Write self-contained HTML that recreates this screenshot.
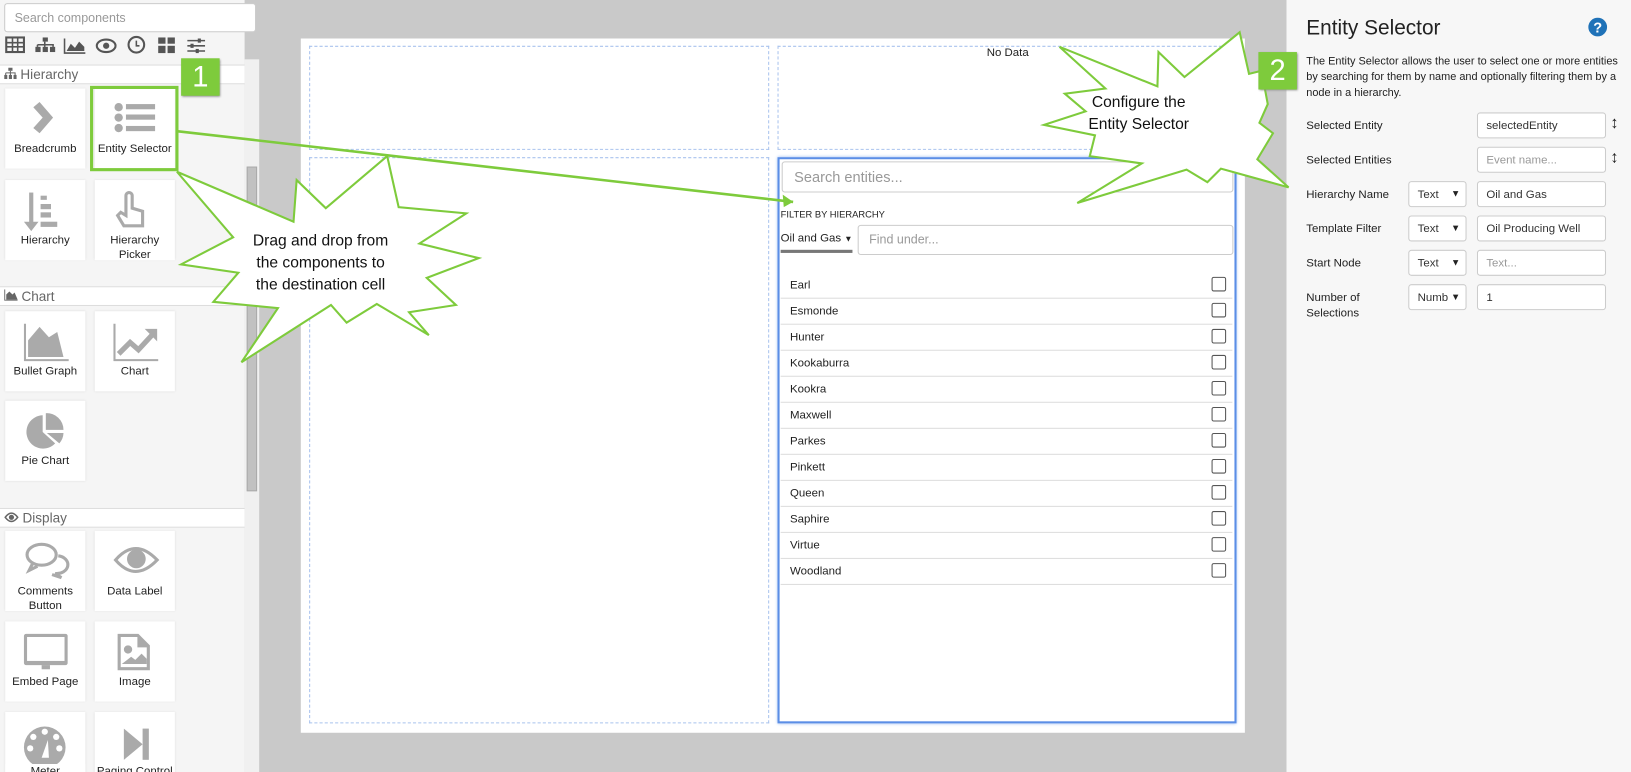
<!DOCTYPE html>
<html><head><meta charset="utf-8"><style>
*{box-sizing:border-box;margin:0;padding:0}
html,body{width:1631px;height:772px;overflow:hidden}
body{position:relative;font-family:"Liberation Sans",sans-serif;background:#c9c9c9;font-size:11px;color:#222}
#w{position:absolute;left:0;top:0;width:1567px;height:742px;transform:scale(1.04085);transform-origin:0 0}
.a{position:absolute}
.side{left:0;top:0;width:235px;height:742px;background:#f5f5f5}
.search{left:4px;top:3px;width:242px;height:28px;border:1px solid #ccc;border-radius:3px;background:#fff;color:#999;font-size:12px;padding:6px 9px}
.hdr{left:0;width:235px;height:19px;background:#fff;border-top:1px solid #ddd;border-bottom:1px solid #ddd;color:#666;font-size:13px;padding:1px 4px}
.tile{width:77px;height:77px;background:#fff;box-shadow:0 0 2px #ddd;text-align:center;font-size:11px;color:#222}
.tile .lbl{position:absolute;left:0;right:0;top:51px;line-height:14px}
.tile svg{position:absolute;left:18px;top:10px;overflow:visible}
.canvas{left:289px;top:37px;width:907px;height:667px;background:#fff}
.cell{border:1px dashed #a9c3ee}
.right{left:1236px;top:0;width:331px;height:742px;background:#f7f7f7}
.lab{left:1255px;font-size:11px;color:#222}
.inp{left:1419px;width:124px;height:25px;border:1px solid #ccc;border-radius:3px;background:#fff;padding:6px 8px;font-size:11px;color:#333}
.sel{left:1353px;width:56px;height:25px;border:1px solid #ccc;border-radius:3px;background:#fff;padding:6px 8px;font-size:11px;color:#333}
.sel:after{content:"▼";position:absolute;right:5px;top:6px;font-size:9px;color:#222}
.row{left:750px;width:434px;height:25px;border-bottom:1px solid #ddd;font-size:11px;padding:6px 9px}
.row i{position:absolute;right:6px;top:4px;width:14px;height:14px;border:1px solid #555;border-radius:2px}
.badge{width:37px;height:36px;background:#7ecb3c;color:#fff;font-size:28px;text-align:center;line-height:36px;box-shadow:1px 1px 2px #888}
</style></head><body><div id="w">
<div class="a side"></div>
<div class="a search">Search components</div>
<svg class="a" style="left:4px;top:34px" width="200" height="20" fill="#555">
<rect x="2" y="2" width="17" height="14" fill="none" stroke="#555" stroke-width="2"/><path d="M2 7h17M2 11h17M8 2v14M13 2v14" stroke="#555" stroke-width="1.5"/>
<rect x="37" y="2" width="5" height="4"/><rect x="30" y="11" width="5" height="5"/><rect x="37" y="11" width="5" height="5"/><rect x="44" y="11" width="5" height="5"/><path d="M39 6v5M32 9h15v2M32 9v2" stroke="#555" stroke-width="1.5" fill="none"/>
<path d="M58 3v14h20" stroke="#555" stroke-width="1.5" fill="none"/><path d="M60 15l4-7 4 4 4-6 5 5v4z"/>
<ellipse cx="98" cy="10" rx="9" ry="6" fill="none" stroke="#555" stroke-width="2"/><circle cx="98" cy="10" r="3"/>
<circle cx="127" cy="9" r="7.5" fill="none" stroke="#555" stroke-width="2"/><path d="M127 5v5h3" stroke="#555" stroke-width="1.5" fill="none"/>
<rect x="148" y="2" width="7" height="6"/><rect x="157" y="2" width="7" height="6"/><rect x="148" y="10" width="7" height="7"/><rect x="157" y="10" width="7" height="7"/>
<path d="M176 5h17M176 10h17M176 15h17" stroke="#555" stroke-width="1.5"/><rect x="186" y="3" width="3" height="4"/><rect x="179" y="8" width="3" height="4"/><rect x="184" y="13" width="3" height="4"/>
</svg>
<div class="a" style="left:235px;top:57px;width:14px;height:685px;background:#f0f0f0"></div>
<div class="a" style="left:237px;top:160px;width:10px;height:312px;background:#c1c1c1;border:1px solid #aaa"></div>

<div class="a hdr" style="top:62px"><svg width="12" height="11" fill="#666"><rect x="4" y="0" width="4" height="3"/><rect x="0" y="7" width="3" height="4"/><rect x="4.5" y="7" width="3" height="4"/><rect x="9" y="7" width="3" height="4"/><path d="M6 3v4M1.5 5h9v2M1.5 5v2" stroke="#666" fill="none"/></svg> Hierarchy</div>
<div class="a tile" style="left:5px;top:85px"><svg width="40" height="40" fill="#aaa"><path d="M15 3l13 15-13 15-6-5 9-10-9-10z"/></svg><div class="lbl">Breadcrumb</div></div>
<div class="a tile" style="left:91px;top:85px"><svg width="40" height="40" fill="#aaa"><circle cx="5" cy="8" r="4"/><circle cx="5" cy="18" r="4"/><circle cx="5" cy="28" r="4"/><rect x="12" y="5" width="28" height="5"/><rect x="12" y="15" width="28" height="5"/><rect x="12" y="26" width="28" height="5"/></svg><div class="lbl">Entity Selector</div></div>
<div class="a tile" style="left:5px;top:173px"><svg width="40" height="44" fill="#aaa"><rect x="5" y="2" width="4" height="30"/><path d="M0 30h14l-7 9z"/><rect x="16" y="5" width="6" height="4"/><rect x="16" y="13" width="10" height="5"/><rect x="16" y="21" width="10" height="5"/><rect x="16" y="30" width="16" height="5"/></svg><div class="lbl">Hierarchy</div></div>
<div class="a tile" style="left:91px;top:173px"><svg width="40" height="40" fill="none" stroke="#aaa" stroke-width="3"><path d="M12 20V5a3 3 0 016 0v12l10 3v14H10L4 24l3-3 5 3z"/></svg><div class="lbl">Hierarchy<br>Picker</div></div>

<div class="a hdr" style="top:275px"><svg width="13" height="11" fill="#666"><path d="M0 0v11h13v-1H1V0z"/><path d="M2 10V5l3-3 3 3 2-2 3 7z"/></svg> Chart</div>
<div class="a tile" style="left:5px;top:299px"><svg width="44" height="40" fill="#aaa"><path d="M1 2v35h42" stroke="#aaa" stroke-width="2" fill="none"/><path d="M4 34V18l11-13 9 10 8-5 6 24z"/></svg><div class="lbl">Bullet Graph</div></div>
<div class="a tile" style="left:91px;top:299px"><svg width="44" height="40"><path d="M1 2v35h42" stroke="#aaa" stroke-width="2" fill="none"/><path d="M5 31l11-11 8 7 13-14" stroke="#aaa" stroke-width="5" fill="none"/><path d="M30 7h12v12z" fill="#aaa"/></svg><div class="lbl">Chart</div></div>
<div class="a tile" style="left:5px;top:385px"><svg width="40" height="40" fill="#aaa"><path d="M18 4a16 16 0 1012 27L18 20z"/><path d="M21 2a16 16 0 0117 16H21z"/><path d="M22 21h16a16 16 0 01-4 10z"/></svg><div class="lbl">Pie Chart</div></div>

<div class="a hdr" style="top:488px"><svg width="14" height="10"><path d="M1 5q6-8 12 0q-6 8-12 0z" fill="none" stroke="#666" stroke-width="1.5"/><circle cx="7" cy="5" r="2.5" fill="#666"/></svg> Display</div>
<div class="a tile" style="left:5px;top:510px"><svg width="44" height="40" fill="none" stroke="#aaa" stroke-width="3"><ellipse cx="17" cy="13" rx="14" ry="10"/><path d="M8 22l-3 6 8-4"/><path d="M33 14a10 8 0 01-3 17l6 4-9-3"/></svg><div class="lbl">Comments<br>Button</div></div>
<div class="a tile" style="left:91px;top:510px"><svg width="44" height="40"><path d="M2 18q19-22 40 0q-21 22-40 0z" fill="none" stroke="#aaa" stroke-width="3"/><circle cx="22" cy="17" r="9" fill="#aaa"/></svg><div class="lbl">Data Label</div></div>
<div class="a tile" style="left:5px;top:597px"><svg width="44" height="40" fill="#aaa"><rect x="0" y="2" width="42" height="30" rx="2"/><rect x="3" y="5" width="36" height="23" fill="#fff"/><rect x="17" y="32" width="8" height="4"/></svg><div class="lbl">Embed Page</div></div>
<div class="a tile" style="left:91px;top:597px"><svg width="40" height="40" fill="#aaa"><path d="M4 2h20l11 11v24H4z"/><path d="M7 5h16v10h9v19H7z" fill="#fff"/><circle cx="14" cy="17" r="4"/><path d="M8 31l9-7 4 3 6-6 5 5v5z"/></svg><div class="lbl">Image</div></div>
<div class="a tile" style="left:5px;top:684px;overflow:hidden"><svg width="44" height="44" fill="#aaa"><circle cx="20" cy="24" r="20"/><circle cx="20" cy="9" r="3" fill="#fff"/><circle cx="9" cy="14" r="3" fill="#fff"/><circle cx="31" cy="14" r="3" fill="#fff"/><circle cx="6" cy="25" r="3" fill="#fff"/><circle cx="34" cy="25" r="3" fill="#fff"/><path d="M17 34l6-17 1 17z" fill="#fff"/></svg><div class="lbl" style="top:50px;background:#fff">Meter</div></div>
<div class="a tile" style="left:91px;top:684px"><svg width="44" height="40" fill="#aaa"><path d="M10 6l18 15-18 15z"/><rect x="28" y="6" width="6" height="30"/></svg><div class="lbl" style="top:50px">Paging Control</div></div>

<div class="a canvas"></div>
<div class="a cell" style="left:297px;top:44px;width:442px;height:100px"></div>
<div class="a cell" style="left:747px;top:44px;width:442px;height:100px"></div>
<div class="a" style="left:948px;top:45px;font-size:11px">No Data</div>
<div class="a cell" style="left:297px;top:151px;width:442px;height:544px"></div>
<div class="a" style="left:747px;top:151px;width:441px;height:544px;border:2px solid #5b8ee6;box-shadow:0 0 3px #9bbcf2"></div>
<div class="a" style="left:751px;top:155px;width:434px;height:30px;border:1px solid #ccc;border-radius:3px;color:#999;font-size:14px;padding:6px 11px">Search entities...</div>
<div class="a" style="left:750px;top:201px;font-size:9px">FILTER BY HIERARCHY</div>
<div class="a" style="left:750px;top:223px;font-size:11px">Oil and Gas <span style="font-size:8px">▼</span></div>
<div class="a" style="left:750px;top:240px;width:69px;height:3px;background:#777"></div>
<div class="a" style="left:824px;top:216px;width:361px;height:29px;border:1px solid #ccc;border-radius:3px;color:#999;font-size:12px;padding:6px 10px">Find under...</div>
<div class="a row" style="top:262px">Earl<i></i></div>
<div class="a row" style="top:287px">Esmonde<i></i></div>
<div class="a row" style="top:312px">Hunter<i></i></div>
<div class="a row" style="top:337px">Kookaburra<i></i></div>
<div class="a row" style="top:362px">Kookra<i></i></div>
<div class="a row" style="top:387px">Maxwell<i></i></div>
<div class="a row" style="top:412px">Parkes<i></i></div>
<div class="a row" style="top:437px">Pinkett<i></i></div>
<div class="a row" style="top:462px">Queen<i></i></div>
<div class="a row" style="top:487px">Saphire<i></i></div>
<div class="a row" style="top:512px">Virtue<i></i></div>
<div class="a row" style="top:537px">Woodland<i></i></div>

<div class="a right"></div>
<div class="a" style="left:1255px;top:16px;font-size:20px;color:#222">Entity Selector</div>
<svg class="a" style="left:1525px;top:16px" width="20" height="20"><circle cx="10" cy="10" r="9" fill="#1f72b8"/><text x="10" y="15" font-size="14" font-weight="bold" fill="#fff" text-anchor="middle" font-family="Liberation Sans">?</text></svg>
<div class="a" style="left:1255px;top:52px;width:300px;font-size:10.5px;line-height:15px">The Entity Selector allows the user to select one or more entities by searching for them by name and optionally filtering them by a node in a hierarchy.</div>
<div class="a lab" style="top:115px">Selected Entity</div><div class="a inp" style="top:108px">selectedEntity</div>
<div class="a lab" style="top:148px">Selected Entities</div><div class="a inp" style="top:141px;color:#999">Event name...</div>
<div class="a" style="left:1547px;top:110px;font-size:16px;font-weight:bold">↕</div>
<div class="a" style="left:1547px;top:143px;font-size:16px;font-weight:bold">↕</div>
<div class="a lab" style="top:181px">Hierarchy Name</div><div class="a sel" style="top:174px">Text</div><div class="a inp" style="top:174px">Oil and Gas</div>
<div class="a lab" style="top:214px">Template Filter</div><div class="a sel" style="top:207px">Text</div><div class="a inp" style="top:207px">Oil Producing Well</div>
<div class="a lab" style="top:247px">Start Node</div><div class="a sel" style="top:240px">Text</div><div class="a inp" style="top:240px;color:#999">Text...</div>
<div class="a lab" style="top:279px;line-height:15px">Number of<br>Selections</div><div class="a sel" style="top:273px;overflow:hidden">Numb</div><div class="a inp" style="top:273px">1</div>

<svg class="a" style="left:0;top:0" width="1567" height="742">
<path d="M170 126L762 194" stroke="#7ecb3c" stroke-width="2.5"/>
<path d="M762 194l-10-7 1 12z" fill="#7ecb3c"/>
<rect x="88" y="84" width="82" height="79" fill="none" stroke="#7ecb3c" stroke-width="3"/>
<polygon points="372,150 383,199 448,205 403,234 460,248 410,267 438,293 393,300 412,322 362,292 333,310 318,293 232,348 267,296 205,290 229,262 174,254 224,228 170,165 282,213 285,173 313,200" fill="#fff" stroke="#7ecb3c" stroke-width="2"/>
<text font-family="Liberation Sans" font-size="15" fill="#111" text-anchor="middle"><tspan x="308" y="236">Drag and drop from</tspan><tspan x="308" y="257">the components to</tspan><tspan x="308" y="278">the destination cell</tspan></text>
<polygon points="1018,45 1112,83 1113,50 1138,74 1191,31 1200,71 1212,68 1218,100 1210,118 1223,128 1208,153 1238,180 1173,162 1160,175 1140,163 1035,195 1097,157 1047,150 1052,130 1003,120 1043,107 1023,90 1062,85" fill="#fff" stroke="#7ecb3c" stroke-width="2"/>
<text font-family="Liberation Sans" font-size="15" fill="#111" text-anchor="middle"><tspan x="1094" y="103">Configure the</tspan><tspan x="1094" y="124">Entity Selector</tspan></text>
</svg>
<div class="a badge" style="left:174px;top:56px">1</div>
<div class="a badge" style="left:1209px;top:50px">2</div>
</div></body></html>
